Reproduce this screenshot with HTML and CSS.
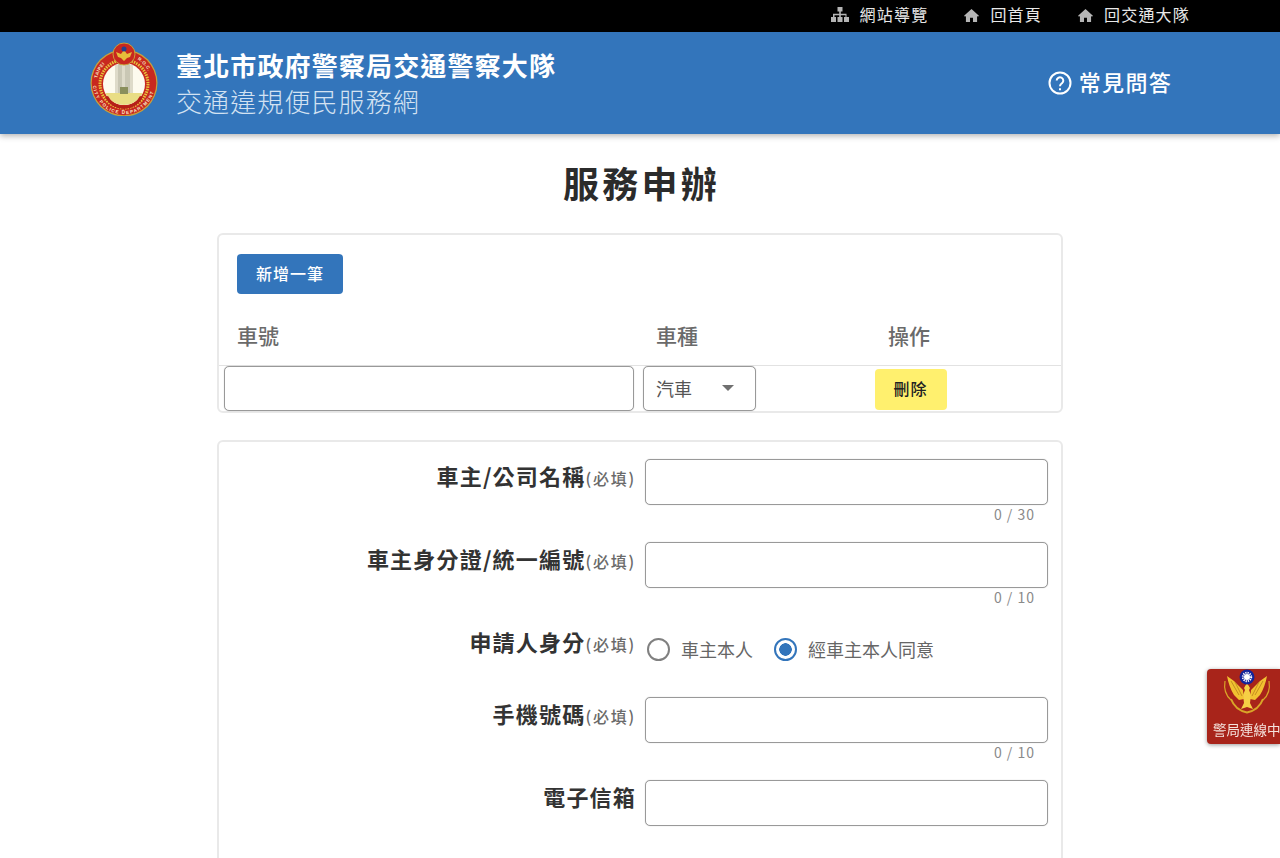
FILE: index.html
```html
<!DOCTYPE html>
<html lang="zh-Hant">
    <head>
        <meta charset="utf-8">
        <title>服務申辦</title>
        <meta name="viewport" content="width=device-width, initial-scale=1.0">
        <link rel="stylesheet" href="styles.css">
    </head>
    <body>
        <nav class="topbar">
            <a class="toplink">
                <svg class="topicon" viewBox="0 0 18 16"><path d="M6.500 0h5v4.500h-1.700v2.300h5.700v3.200h2.500v5h-5v-5h1.500V8.200H9.800v1.800h1.700v5h-5v-5h1.700V8.200H3.500v1.800H5v5H0v-5h2.000V6.800h6.200V4.500H6.500z"/></svg>
                <span class="lift">網站導覽</span>
            </a>
            <a class="toplink">
                <svg class="topicon home" viewBox="0 0 16 14"><path d="M8 0l8 7.200-1 1.100-1-.8V14H9.600V9.500H6.400V14H2V7.500l-1 .8-1-1.100z"/></svg>
                <span class="lift">回首頁</span>
            </a>
            <a class="toplink">
                <svg class="topicon home" viewBox="0 0 16 14"><path d="M8 0l8 7.200-1 1.100-1-.8V14H9.600V9.500H6.400V14H2V7.500l-1 .8-1-1.100z"/></svg>
                <span class="lift">回交通大隊</span>
            </a>
        </nav>

        <header class="header">
            <div class="brand">
                <svg class="logo" viewBox="0 0 70 74">
                    <defs>
                        <path id="arcleft" d="M8.400 36.300A27 27 0 0 1 21.500 17.600"/>
                        <path id="arcright" d="M48.500 17.600A27 27 0 0 1 61.600 36.300"/>
                        <path id="arcbottom" d="M4.100 43.700A31 31 0 0 0 65.900 43.700"/>
                    </defs>
                    <circle cx="35" cy="41" r="33.500" fill="#c9a13a"/>
                    <circle cx="35" cy="41" r="32.300" fill="#c8281f"/>
                    <circle cx="35" cy="42" r="24" fill="none" stroke="#e8c53a" stroke-width="3" stroke-dasharray="1.500 1"/>
                    <circle cx="35" cy="42" r="21" fill="#fdfbee"/>
                    <path d="M16 51h38a21 21 0 0 1-38 0z" fill="#e9dd84"/>
                    <path d="M26 23h18v28H26z" fill="#dedbc9"/>
                    <path d="M29 21h4v30h-4zM36 21h5v30h-5z" fill="#c9c7b4"/>
                    <path d="M31 45h8v7h-8z" fill="#8a8f5c"/>
                    <path d="M16 55a21 21 0 0 0 38 0l-3-1a18 18 0 0 1-32 0z" fill="#b52018"/>
                    <text class="logotext"><textPath href="#arcleft">TAIPEI</textPath></text>
                    <text class="logotext"><textPath href="#arcright">R.O.C.</textPath></text>
                    <text class="logotext wide"><textPath href="#arcbottom">CITY POLICE DEPARTMENT</textPath></text>
                    <circle cx="35" cy="12" r="11" fill="#c8281f" stroke="#c9a13a"/>
                    <path d="M27 10l5 2 3-4 3 4 5-2-2 5-3 1-3 3-3-3-3-1z" fill="#e6bd3a"/>
                    <circle cx="35" cy="7" r="2.500" fill="#26408f"/>
                </svg>
                <div class="brandtext">
                    <div class="brandname">臺北市政府警察局交通警察大隊</div>
                    <div class="brandsub">交通違規便民服務網</div>
                </div>
            </div>
            <a class="faq">
                <svg class="faqicon" viewBox="0 0 24 24"><circle cx="12" cy="12" r="10.500"/><path d="M8.700 9.600a3.300 3.300 0 1 1 5.300 2.600c-1.300 1-2 1.500-2 3"/><path class="dot" d="M11 17.200h2v2h-2z"/></svg>
                <span class="lift">常見問答</span>
            </a>
        </header>

        <main class="page">
            <h1 class="pagetitle">服務申辦</h1>

            <section class="card">
                <div class="cardtop">
                    <button class="btnadd" type="button">新增一筆</button>
                </div>
                <div class="cargrid cargridhead">
                    <div class="carhead">車號</div>
                    <div class="carhead">車種</div>
                    <div class="carhead center">操作</div>
                </div>
                <div class="cargrid">
                    <input class="field plate" type="text">
                    <div class="selectwrap">
                        <select class="cartype"><option>汽車</option><option>機車</option></select>
                    </div>
                    <div class="center"><button class="btndel" type="button">刪除</button></div>
                </div>
            </section>

            <section class="card formcard">
                <div class="formrow">
                    <label class="formlabel">車主/公司名稱<small>(必填)</small></label>
                    <div class="formvalue">
                        <input class="field" type="text">
                        <div class="count">0 / 30</div>
                    </div>
                </div>
                <div class="formrow">
                    <label class="formlabel">車主身分證/統一編號<small>(必填)</small></label>
                    <div class="formvalue">
                        <input class="field" type="text">
                        <div class="count">0 / 10</div>
                    </div>
                </div>
                <div class="formrow radiorow">
                    <label class="formlabel">申請人身分<small>(必填)</small></label>
                    <div class="radios">
                        <label class="radio"><input type="radio" name="who">車主本人</label>
                        <label class="radio"><input type="radio" name="who" checked>經車主本人同意</label>
                    </div>
                </div>
                <div class="formrow">
                    <label class="formlabel">手機號碼<small>(必填)</small></label>
                    <div class="formvalue">
                        <input class="field" type="text">
                        <div class="count">0 / 10</div>
                    </div>
                </div>
                <div class="formrow">
                    <label class="formlabel">電子信箱</label>
                    <div class="formvalue">
                        <input class="field" type="text">
                    </div>
                </div>
            </section>
        </main>

        <a class="online">
            <svg class="emblem" viewBox="0 0 50 48">
                <path d="M9 30Q13 41 25 43.500Q37 41 41 30" fill="none" stroke="#d9a528" stroke-width="2"/>
                <path d="M3 12Q1 24 9 31M47 12Q49 24 41 31" fill="none" stroke="#d9a528" stroke-width="1.200"/>
                <path d="M5 7L12 12L21 21L22 30L17 31L12 26Q7 18 5 7zM45 7L38 12L29 21L28 30L33 31L38 26Q43 18 45 7z" fill="#f1c231"/>
                <path d="M9 12L17 26M13 13L20 27M41 12L33 26M37 13L30 27" stroke="#b9801c" stroke-width="0.800"/>
                <path d="M25 14l3 5-1 2 2 5-1 8 3 6-6-2-6 2 3-6-1-8 2-5-1-2z" fill="#f6cf45"/>
                <circle cx="25" cy="8" r="7.500" fill="#14249a"/>
                <circle cx="25" cy="8" r="4.200" fill="none" stroke="#fff" stroke-width="2" stroke-dasharray="1.200 1"/>
                <circle cx="25" cy="8" r="3" fill="#fff"/>
            </svg>
            <span class="onlinetext">警局連線中</span>
        </a>
    </body>
</html>
```

FILE: styles.css
```css
html {
    height: 100%;
    overflow: hidden;
}
body {
    margin: 0;
    font-family: "Noto Sans CJK TC", "Noto Sans", sans-serif;
    color: #333333;
    background: white;
}
button, input, select {
    font-family: inherit;
}
.lift {
    padding-bottom: 4px;
}

/* top black bar */
.topbar {
    height: 32px;
    background: black;
    display: flex;
    justify-content: flex-end;
    align-items: center;
    gap: 36px;
    padding-right: 90px;
}
.toplink {
    display: flex;
    align-items: center;
    gap: 11px;
    color: #e8e8e8;
    font-size: 16px;
    letter-spacing: 1.200px;
}
.topicon {
    width: 18px;
    height: 16px;
    margin-bottom: 2px;
    fill: #b5b5b5;
}
.topicon.home {
    width: 15px;
    height: 13px;
}

/* blue header */
.header {
    height: 102px;
    background: #3375bb;
    box-shadow: 0 2px 6px rgba(0, 0, 0, 0.3);
    display: flex;
    justify-content: space-between;
    align-items: center;
    padding: 0 108px 0 89px;
    position: relative;
}
.brand {
    display: flex;
    align-items: center;
    gap: 17px;
}
.logo {
    width: 70px;
    height: 74px;
    margin-top: -8px;
}
.logotext {
    font-family: "Liberation Sans", sans-serif;
    font-size: 4.500px;
    font-weight: bold;
    fill: #f8e9c8;
    letter-spacing: 0.4px;
}
.logotext.wide {
    letter-spacing: 1.200px;
}
.brandname {
    color: white;
    font-size: 26px;
    font-weight: 700;
    letter-spacing: 1.150px;
    line-height: 36px;
}
.brandsub {
    color: #d3e2f2;
    font-size: 26px;
    font-weight: 300;
    letter-spacing: 1.100px;
    line-height: 36px;
}
.faq {
    display: flex;
    align-items: center;
    gap: 7px;
    color: white;
    font-size: 22px;
    font-weight: 500;
    letter-spacing: 1.300px;
}
.faqicon {
    width: 24px;
    height: 24px;
    fill: none;
    stroke: white;
    stroke-width: 2;
}
.faqicon .dot {
    fill: white;
    stroke: none;
}

/* page */
.page {
    width: 846px;
    margin: 0 auto;
}
.pagetitle {
    margin: 20px 0 23px;
    padding-left: 3px;
    text-align: center;
    font-size: 36px;
    line-height: 56px;
    font-weight: 700;
    letter-spacing: 3.200px;
    color: #2b2b2b;
}
.card {
    border: 2px solid #e9e9e9;
    border-radius: 6px;
    background: white;
}
.cardtop {
    padding: 19px 18px 0;
}
.btnadd {
    display: block;
    width: 106px;
    height: 40px;
    padding: 0 0 3px;
    border: none;
    border-radius: 4px;
    background: #3375bb;
    color: white;
    font-size: 16px;
    font-weight: 500;
    letter-spacing: 1px;
}
.cargrid {
    display: grid;
    grid-template-columns: 420px 121px 1fr;
    align-items: center;
    height: 45px;
}
.cargridhead {
    height: 71px;
    align-items: end;
    border-bottom: 1px solid #e2e2e2;
}
.carhead {
    padding: 0 0 14px 18px;
    font-size: 21px;
    line-height: 32px;
    font-weight: 500;
    color: #6a6a6a;
}
.cargridhead .carhead:nth-child(2) {
    padding-left: 17px;
}
.carhead.center {
    padding: 0 3px 14px 0;
}
.center {
    text-align: center;
}
.field {
    display: block;
    box-sizing: border-box;
    width: 100%;
    height: 46px;
    padding: 0 12px;
    border: 1px solid #999999;
    box-shadow: 0 0 1px #bbbbbb;
    border-radius: 5px;
    background: white;
}
.plate {
    width: 410px;
    height: 45px;
    margin-left: 5px;
}
.selectwrap {
    position: relative;
    width: 113px;
    margin-left: 4px;
}
.selectwrap::after {
    content: "";
    position: absolute;
    left: 79px;
    top: 19px;
    border: 6px solid transparent;
    border-top: 6px solid #707070;
    border-bottom: none;
}
.cartype {
    display: block;
    box-sizing: border-box;
    width: 100%;
    height: 45px;
    padding: 0 0 2px 12px;
    border: 1px solid #999999;
    box-shadow: 0 0 1px #bbbbbb;
    border-radius: 5px;
    background: white;
    color: #555555;
    font-size: 18px;
    appearance: none;
}
.btndel {
    width: 72px;
    height: 41px;
    margin-top: 2px;
    padding: 0 0 3px;
    border: none;
    border-radius: 4px;
    background: #fff06e;
    color: #222222;
    font-size: 16px;
    font-weight: 500;
    letter-spacing: 1px;
}

/* form card */
.formcard {
    margin-top: 27px;
    padding-top: 17px;
}
.formrow {
    display: grid;
    grid-template-columns: 417px 403px;
    column-gap: 9px;
    height: 83px;
}
.formrow.radiorow {
    height: 72px;
}
.formlabel {
    text-align: right;
    font-size: 22px;
    line-height: 32px;
    font-weight: 700;
    letter-spacing: 1.200px;
    color: #333333;
}
.formlabel small {
    font-size: 16px;
    font-weight: 500;
    letter-spacing: 1.800px;
    color: #6a6a6a;
}
.count {
    padding-right: 13px;
    text-align: right;
    font-size: 14px;
    line-height: 18px;
    letter-spacing: 1px;
    color: #8a8a8a;
}
.radios {
    display: flex;
    align-items: flex-start;
    gap: 19px;
    padding-top: 8px;
}
.radio {
    display: flex;
    align-items: center;
    gap: 11px;
    padding-left: 2px;
    font-size: 18px;
    line-height: 32px;
    color: #666666;
}
.radio input {
    appearance: none;
    box-sizing: border-box;
    width: 23px;
    height: 23px;
    margin: 0;
    border: 2px solid #808080;
    border-radius: 50%;
}
.radio input:checked {
    border-color: #3375bb;
    background: radial-gradient(circle, #3375bb 0 6px, white 6.500px);
}

/* floating badge */
.online {
    position: fixed;
    top: 669px;
    right: 0;
    width: 73px;
    height: 75px;
    background: #a8241a;
    border-radius: 4px 0 0 4px;
    box-shadow: 0 1px 4px rgba(0, 0, 0, 0.4);
    overflow: hidden;
}
.emblem {
    position: absolute;
    left: 15px;
    top: 0;
    width: 50px;
    height: 48px;
}
.onlinetext {
    position: absolute;
    left: 6px;
    top: 50px;
    white-space: nowrap;
    color: #f4e2dc;
    font-size: 13.500px;
    line-height: 20px;
}
```
